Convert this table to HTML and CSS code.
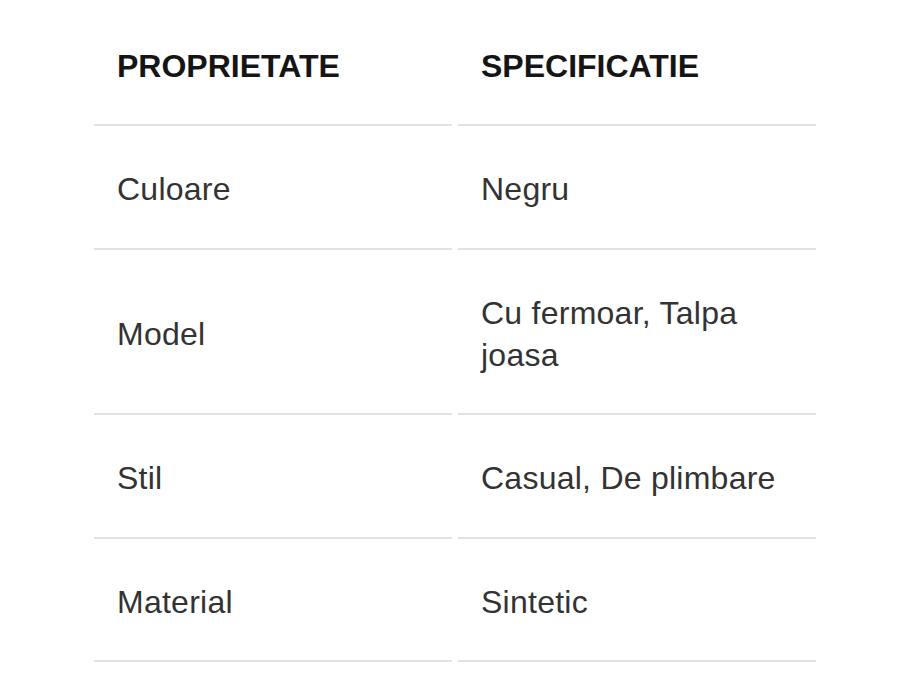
FILE: index.html
```html
<!DOCTYPE html>
<html lang="ro">
<head>
<meta charset="utf-8">
<title>Specificatii</title>
<link rel="stylesheet" href="styles.css">
</head>
<body>
<div class="spec-table">
  <div class="cell head">PROPRIETATE</div>
  <div class="cell head">SPECIFICATIE</div>
  <div class="cell">Culoare</div>
  <div class="cell">Negru</div>
  <div class="cell">Model</div>
  <div class="cell">Cu fermoar, Talpa joasa</div>
  <div class="cell">Stil</div>
  <div class="cell">Casual, De plimbare</div>
  <div class="cell">Material</div>
  <div class="cell">Sintetic</div>
</div>
</body>
</html>
```
FILE: styles.css
```css
html, body {
  margin: 0;
  padding: 0;
  background: #ffffff;
}
body {
  font-family: "Liberation Sans", Arial, Helvetica, sans-serif;
}
.spec-table {
  width: 722px;
  margin: 2.5px auto 0;
  display: grid;
  grid-template-columns: 1fr 1fr;
  column-gap: 6px;
}
.cell {
  display: flex;
  align-items: center;
  padding: 42px 24px 37.5px 23px;
  font-size: 32px;
  line-height: 42px;
  letter-spacing: 0.25px;
  color: #333333;
  border-bottom: 2px solid #e2e2e2;
}
.cell.head {
  font-weight: bold;
  letter-spacing: 0;
  color: #151515;
}
```
